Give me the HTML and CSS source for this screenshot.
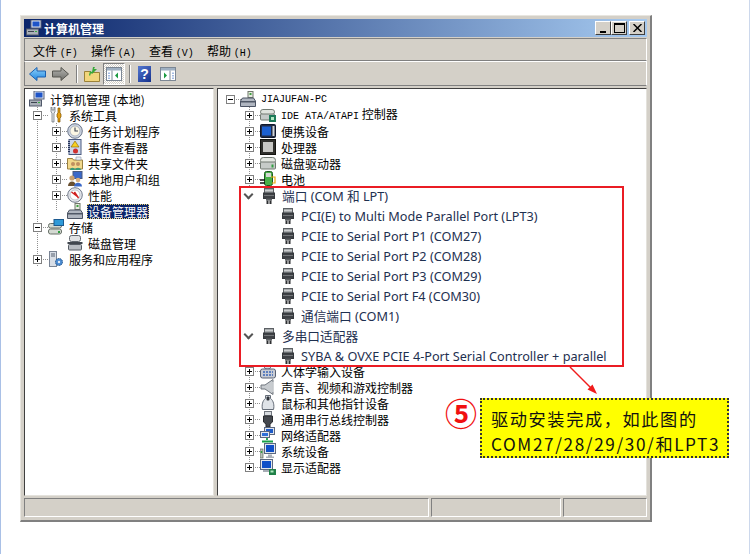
FILE: index.html
```html
<!DOCTYPE html>
<html lang="zh-CN">
<head>
  <meta charset="UTF-8" />
  <title>计算机管理</title>
  <link rel="stylesheet" href="styles.css">
</head>
<body>
<svg class="defs" width="0" height="0">
  <defs>
    <symbol id="i-computer" viewBox="0 0 16 16">
      <rect x="5" y="0" width="10" height="8" fill="#dfe6f0" stroke="#56607a"/><rect x="6.500" y="1.500" width="7" height="5" fill="#1f55c8"/>
      <rect x="0.500" y="9" width="12" height="6" fill="#aab0b8" stroke="#50586a"/><rect x="2" y="11" width="6" height="1" fill="#3c4450"/><rect x="9" y="11" width="2" height="1" fill="#35b040"/>
    </symbol>
    <symbol id="i-tools" viewBox="0 0 16 16">
      <path d="M3 0v5l1 1v9h2V6l1-1V0L6 0v3H4V0z" fill="#e6e8ea" stroke="#606870" stroke-width=".7"/>
      <path d="M10 1h2v5l1 1v3l-1 1v4h-2v-4l-1-1V7l1-1z" fill="#e8a010" stroke="#7a5200" stroke-width=".7"/>
    </symbol>
    <symbol id="i-clock" viewBox="0 0 16 16">
      <circle cx="8" cy="8" r="7.300" fill="#cfd6e2" stroke="#6a7488"/><circle cx="8" cy="8" r="5" fill="#fbf6e4" stroke="#8a94a8" stroke-width=".6"/><path d="M8 4.500V8h3" fill="none" stroke="#3a4252" stroke-width="1.100"/>
    </symbol>
    <symbol id="i-event" viewBox="0 0 16 16">
      <rect x="2" y="0.500" width="12" height="15" fill="#cdd8ea" stroke="#4a5a80"/><path d="M8 2l4 6H4z" fill="#f8d020" stroke="#806000" stroke-width=".6"/><circle cx="8.500" cy="12" r="2.500" fill="#d03030"/><path d="M2 2v12" stroke="#26345c" stroke-width="2" stroke-dasharray="1 1"/>
    </symbol>
    <symbol id="i-share" viewBox="0 0 16 16">
      <path d="M0.500 3.500h5l1 1.500h9v9h-15z" fill="#f2d98c" stroke="#9a8040"/><path d="M9 2h5v3H9z" fill="#e8eef4" stroke="#8a96a8" stroke-width=".6"/><circle cx="6" cy="9" r="2" fill="#c09060"/><circle cx="11" cy="9" r="2" fill="#c09060"/><path d="M3 15c0-3 5-3 5 0zM8 15c0-3 6-3 6 0z" fill="#3a9a78"/>
    </symbol>
    <symbol id="i-users" viewBox="0 0 16 16">
      <rect x="6" y="0.500" width="9" height="7" fill="#3a68c8" stroke="#4a5a80"/><circle cx="5" cy="7" r="2.600" fill="#c8a070"/><path d="M1 15c0-6 8-6 8 0z" fill="#6a5030"/><circle cx="11" cy="9" r="2.300" fill="#d8b080"/><path d="M7 15.500c0-5 8-5 8 0z" fill="#3a68c8"/>
    </symbol>
    <symbol id="i-perf" viewBox="0 0 16 16">
      <circle cx="8" cy="8" r="7.300" fill="#e8eaee" stroke="#707888"/><circle cx="8" cy="8" r="5" fill="#fff" stroke="#9aa2b0" stroke-width=".6"/><path d="M4.500 5l4 3-1-3 4 6" fill="none" stroke="#d02020" stroke-width="1.400"/>
    </symbol>
    <symbol id="i-devmgr" viewBox="0 0 16 16">
      <rect x="8" y="0.500" width="5" height="6" fill="#e6eae0" stroke="#70786a"/><rect x="9.500" y="2" width="2" height="2" fill="#40a040"/>
      <path d="M0.500 10l2-3h11l2 3v5.500H.5z" fill="#b0b6c0" stroke="#4c5464"/><rect x="1" y="10" width="14" height="1.500" fill="#505866"/>
    </symbol>
    <symbol id="i-storage" viewBox="0 0 16 16">
      <rect x="0.500" y="4.500" width="13" height="4.500" rx="2" fill="#d4dad2" stroke="#687068"/><rect x="0.500" y="10" width="13" height="5" rx="2" fill="#d4dad2" stroke="#687068"/><rect x="10" y="12" width="2" height="2" fill="#30a040"/><rect x="6" y="0.500" width="9.500" height="6" fill="#2f9ad8" stroke="#1c5a90"/>
    </symbol>
    <symbol id="i-disk" viewBox="0 0 16 16">
      <rect x="2.500" y="0.500" width="11" height="6" rx="2" fill="#e0e2e4" stroke="#60666e"/><rect x="0.500" y="7" width="15" height="2" fill="#40464e"/><rect x="1.500" y="9.500" width="13" height="5.500" rx="1" fill="#b8bcc2" stroke="#565c64"/>
    </symbol>
    <symbol id="i-services" viewBox="0 0 16 16">
      <rect x="1.500" y="0.500" width="7" height="15" fill="#d8dee6" stroke="#7a8494"/><path d="M3 3h4M3 5h4" stroke="#566070"/><circle cx="11" cy="11" r="3.500" fill="#4a8ad0" stroke="#2a5a90" stroke-dasharray="1.500 .6"/><circle cx="11" cy="11" r="1.200" fill="#e4eef8"/>
    </symbol>
    <symbol id="i-ide" viewBox="0 0 16 16">
      <rect x="0.500" y="2.500" width="14" height="5" rx="2.400" fill="#dfe3de" stroke="#737b73"/><rect x="0.500" y="7" width="14" height="6" rx="1" fill="#c4c9c8" stroke="#737b73"/><rect x="9" y="8" width="7" height="7" fill="#1c7a58"/><rect x="11" y="10" width="3" height="3" fill="#b0e8c0"/>
    </symbol>
    <symbol id="i-portable" viewBox="0 0 16 16">
      <rect x="0.500" y="1.500" width="15" height="13" rx="1" fill="#222c44" stroke="#10182c"/><rect x="2" y="3.500" width="9" height="9" fill="#1c60d0"/><rect x="12.500" y="3" width="2" height="10" fill="#d0d4d8"/>
    </symbol>
    <symbol id="i-cpu" viewBox="0 0 16 16">
      <rect x="0.500" y="0.500" width="15" height="15" fill="#30302c" stroke="#14140f"/><rect x="3" y="3" width="10" height="10" fill="#c8c8c4"/>
    </symbol>
    <symbol id="i-drive" viewBox="0 0 16 16">
      <rect x="0.500" y="2.500" width="15" height="6" rx="2.800" fill="#e4e8e2" stroke="#707870"/><rect x="0.500" y="7" width="15" height="7" rx="1" fill="#c6cbc8" stroke="#707870"/><rect x="11.500" y="9.500" width="2" height="3" fill="#30a040"/>
    </symbol>
    <symbol id="i-battery" viewBox="0 0 16 16">
      <rect x="4.500" y="0.500" width="8" height="14" rx="2" fill="#48b048" stroke="#1c5a20"/><rect x="6" y="2" width="5" height="4" fill="#d4d8d4"/><path d="M0 9h5M0 12h5" stroke="#101010" stroke-width="1.400"/><path d="M11 6l4 0v6h-3" fill="none" stroke="#e8a810" stroke-width="1.200"/>
    </symbol>
    <symbol id="i-port" viewBox="0 0 12 16">
      <rect x="1.500" y="0.500" width="9" height="5" fill="#a4a8aa" stroke="#5c6064"/>
      <path d="M2.500 2.500h7" stroke="#f4f4f4" stroke-dasharray="1 1"/>
      <rect x="0.500" y="5" width="11" height="5.500" fill="#3e4145" stroke="#35383c"/>
      <rect x="1" y="7" width="10" height="1" fill="#74777a"/>
      <rect x="3" y="10.500" width="6" height="2" fill="#5c5f62"/>
      <path d="M3.500 12.500h2V16h-2zM6.500 12.500h2V16h-2z" fill="#2e3033"/>
    </symbol>
    <symbol id="i-hid" viewBox="0 0 16 16">
      <rect x="4" y="0" width="7" height="6" rx="3" fill="#d8dce2" stroke="#70788a"/><rect x="0.500" y="6" width="15" height="9" rx="2" fill="#c8ccd4" stroke="#5a6274"/><path d="M3 9h10M3 12h10" stroke="#3a66b8" stroke-width="1.400" stroke-dasharray="2 1"/>
    </symbol>
    <symbol id="i-sound" viewBox="0 0 16 16">
      <path d="M1 6h4L13 0.500v15L5 10H1z" fill="#c8ccd0" stroke="#70767e"/><path d="M13 3v10" stroke="#eef0f2"/>
    </symbol>
    <symbol id="i-mouse" viewBox="0 0 16 16">
      <path d="M5.500 0.500h5v3c3 2 4 7 3 11h-11c-1-4 0-9 3-11z" fill="#dfe3e8" stroke="#646c78"/><rect x="6.500" y="1.500" width="3" height="4" rx="1" fill="#30343c"/>
    </symbol>
    <symbol id="i-usb" viewBox="0 0 16 16">
      <rect x="4.500" y="0.500" width="7" height="4" fill="#d8dce0" stroke="#70767e"/><path d="M3.500 5h9v6l-2.500 2v3H6v-3L3.500 11z" fill="#44484e" stroke="#2a2c30"/>
    </symbol>
    <symbol id="i-network" viewBox="0 0 16 16">
      <rect x="4.500" y="0.500" width="10" height="7" fill="#dfe4ec" stroke="#5c6880"/><rect x="6" y="2" width="7" height="4" fill="#1c5ac8"/><rect x="0.500" y="4.500" width="9" height="6" fill="#e4e8f0" stroke="#5c6880"/><rect x="2" y="6" width="6" height="3" fill="#2f70d8"/><path d="M7 11v2M2 14.500h11" stroke="#18a048" stroke-width="1.800"/>
    </symbol>
    <symbol id="i-system" viewBox="0 0 16 16">
      <rect x="0" y="6" width="3" height="9" fill="#b8c0b8" stroke="#60685c" stroke-width=".7"/><rect x="0.800" y="8" width="1.400" height="2" fill="#30a040"/><rect x="4.500" y="0.500" width="11" height="10" fill="#e2e6ec" stroke="#5c6880"/><rect x="6" y="2" width="8" height="7" fill="#1050c8"/><path d="M8 11.500h4v2h2v1.500H6v-1.500h2z" fill="#a8aeb6"/>
    </symbol>
    <symbol id="i-display" viewBox="0 0 16 16">
      <rect x="0.500" y="0.500" width="12" height="10" fill="#e2e6ec" stroke="#5c6880"/><rect x="2" y="2" width="9" height="7" fill="#1050c8"/><rect x="3" y="11" width="7" height="2" fill="#a8aeb6"/><rect x="9" y="10" width="7" height="6" fill="#208048"/><rect x="10.500" y="11.500" width="3" height="2" fill="#b0e8c0"/>
    </symbol>
    <linearGradient id="g-back" x1="0" y1="0" x2="0" y2="1"><stop offset="0" stop-color="#8fd2fa"/><stop offset="1" stop-color="#1f86e0"/></linearGradient>
    <linearGradient id="g-forward" x1="0" y1="0" x2="0" y2="1"><stop offset="0" stop-color="#b4b4b0"/><stop offset="1" stop-color="#6e6e6a"/></linearGradient>
  </defs>
</svg>

<div class="window">
  <div class="titlebar">
    <svg class="ti"><use href="#i-computer"/></svg>
    <span class="title-text">计算机管理</span>
    <div class="winbtns">
      <button class="winbtn"><span class="min-mark"></span></button>
      <button class="winbtn"><span class="max-mark"></span></button>
      <button class="winbtn gap-left"><svg width="9" height="8" viewBox="0 0 9 8"><path d="M0.500 0l8 8M8.500 0l-8 8" stroke="#000" stroke-width="1.500"/></svg></button>
    </div>
  </div>

  <div class="menubar">
    <span class="menu-item">文件 <span class="acc">(F)</span></span>
    <span class="menu-item">操作 <span class="acc">(A)</span></span>
    <span class="menu-item">查看 <span class="acc">(V)</span></span>
    <span class="menu-item">帮助 <span class="acc">(H)</span></span>
  </div>

  <div class="toolbar">
    <svg class="tool" width="17" height="16" viewBox="0 0 17 16"><path d="M0.500 8L8 1.500v3.500h8.500v6H8v3.500z" fill="url(#g-back)" stroke="#1c60b0"/></svg>
    <svg class="tool" width="17" height="16" viewBox="0 0 17 16"><path d="M16.500 8L9 1.500v3.500H.5v6H9v3.500z" fill="url(#g-forward)" stroke="#55554f"/></svg>
    <span class="sep"></span>
    <svg class="tool tool-up" width="16" height="16" viewBox="0 0 16 16"><path d="M0.500 5.500h6l1 1h8v9h-15z" fill="#f2d67c" stroke="#9c8238"/><path d="M5 9l1-4 2 1 1-5h2l-1 2 3 0-5 5-1-1-1 3z" fill="#38a838"/></svg>
    <span class="tool-active"><svg width="16" height="14" viewBox="0 0 16 14"><rect x="0.500" y="0.500" width="15" height="13" fill="#fff" stroke="#7c8794"/><rect x="1" y="1" width="14" height="2.500" fill="#9fb0c2"/><path d="M6 3.500v10" stroke="#7c8794"/><path d="M3 5.500v7" stroke="#4a78c8" stroke-dasharray="1.500 1"/><path d="M12 5.500v6l-3-3z" fill="#1c9a40"/></svg></span>
    <span class="sep sep-b"></span>
    <span class="help-icon">?</span>
    <svg class="tool" width="16" height="14" viewBox="0 0 16 14"><rect x="0.500" y="0.500" width="15" height="13" fill="#fff" stroke="#7c8794"/><rect x="1" y="1" width="14" height="2.500" fill="#9fb0c2"/><path d="M10 3.500v10" stroke="#7c8794"/><path d="M13 5.500v7" stroke="#4a78c8" stroke-dasharray="1.500 1"/><path d="M4 5.500v6l3-3z" fill="#1c9a40"/></svg>
  </div>

  <div class="panes">
    <div class="pane left-pane">
      <div class="row"><svg class="ic"><use href="#i-computer"/></svg><span class="lb">计算机管理 (本地)</span></div>
      <div class="branch">
        <div class="row lv1"><i class="exp minus"></i><svg class="ic"><use href="#i-tools"/></svg><span class="lb">系统工具</span></div>
        <div class="branch sub">
          <div class="row lv2"><i class="exp plus"></i><svg class="ic"><use href="#i-clock"/></svg><span class="lb">任务计划程序</span></div>
          <div class="row lv2"><i class="exp plus"></i><svg class="ic"><use href="#i-event"/></svg><span class="lb">事件查看器</span></div>
          <div class="row lv2"><i class="exp plus"></i><svg class="ic"><use href="#i-share"/></svg><span class="lb">共享文件夹</span></div>
          <div class="row lv2"><i class="exp plus"></i><svg class="ic"><use href="#i-users"/></svg><span class="lb">本地用户和组</span></div>
          <div class="row lv2"><i class="exp plus"></i><svg class="ic"><use href="#i-perf"/></svg><span class="lb">性能</span></div>
          <div class="row lv2"><i class="exp none"></i><svg class="ic"><use href="#i-devmgr"/></svg><span class="lb selected">设备管理器</span></div>
        </div>
        <div class="row lv1"><i class="exp minus"></i><svg class="ic"><use href="#i-storage"/></svg><span class="lb">存储</span></div>
        <div class="row lv2"><i class="exp none"></i><svg class="ic"><use href="#i-disk"/></svg><span class="lb">磁盘管理</span></div>
        <div class="row lv1"><i class="exp plus"></i><svg class="ic"><use href="#i-services"/></svg><span class="lb">服务和应用程序</span></div>
      </div>
    </div>

    <div class="splitter"></div>

    <div class="pane right-pane">
      <div class="row rroot"><i class="exp minus"></i><svg class="ic"><use href="#i-devmgr"/></svg><span class="lb latin-mono">JIAJUFAN-PC</span></div>
      <div class="branch rbranch">
        <div class="row rlv1"><i class="exp plus"></i><svg class="ic"><use href="#i-ide"/></svg><span class="lb"><span class="latin-mono">IDE ATA/ATAPI</span> 控制器</span></div>
        <div class="row rlv1"><i class="exp plus"></i><svg class="ic"><use href="#i-portable"/></svg><span class="lb">便携设备</span></div>
        <div class="row rlv1"><i class="exp plus"></i><svg class="ic"><use href="#i-cpu"/></svg><span class="lb">处理器</span></div>
        <div class="row rlv1"><i class="exp plus"></i><svg class="ic"><use href="#i-drive"/></svg><span class="lb">磁盘驱动器</span></div>
        <div class="row rlv1"><i class="exp plus"></i><svg class="ic"><use href="#i-battery"/></svg><span class="lb">电池</span></div>

        <div class="highlight">
          <div class="hrow cat"><span class="chev"></span><svg class="pi"><use href="#i-port"/></svg><span class="hl">端口 (COM 和 LPT)</span></div>
          <div class="hrow dev"><svg class="pi"><use href="#i-port"/></svg><span class="hl">PCI(E) to Multi Mode Parallel Port (LPT3)</span></div>
          <div class="hrow dev"><svg class="pi"><use href="#i-port"/></svg><span class="hl">PCIE to Serial Port P1 (COM27)</span></div>
          <div class="hrow dev"><svg class="pi"><use href="#i-port"/></svg><span class="hl">PCIE to Serial Port P2 (COM28)</span></div>
          <div class="hrow dev"><svg class="pi"><use href="#i-port"/></svg><span class="hl">PCIE to Serial Port P3 (COM29)</span></div>
          <div class="hrow dev"><svg class="pi"><use href="#i-port"/></svg><span class="hl">PCIE to Serial Port F4 (COM30)</span></div>
          <div class="hrow dev"><svg class="pi"><use href="#i-port"/></svg><span class="hl">通信端口 (COM1)</span></div>
          <div class="hrow cat"><span class="chev"></span><svg class="pi"><use href="#i-port"/></svg><span class="hl">多串口适配器</span></div>
          <div class="hrow dev"><svg class="pi"><use href="#i-port"/></svg><span class="hl">SYBA &amp; OVXE PCIE 4-Port Serial Controller + parallel</span></div>
        </div>

        <div class="row rlv1"><i class="exp plus"></i><svg class="ic"><use href="#i-hid"/></svg><span class="lb">人体学输入设备</span></div>
        <div class="row rlv1"><i class="exp plus"></i><svg class="ic"><use href="#i-sound"/></svg><span class="lb">声音、视频和游戏控制器</span></div>
        <div class="row rlv1"><i class="exp plus"></i><svg class="ic"><use href="#i-mouse"/></svg><span class="lb">鼠标和其他指针设备</span></div>
        <div class="row rlv1"><i class="exp plus"></i><svg class="ic"><use href="#i-usb"/></svg><span class="lb">通用串行总线控制器</span></div>
        <div class="row rlv1"><i class="exp plus"></i><svg class="ic"><use href="#i-network"/></svg><span class="lb">网络适配器</span></div>
        <div class="row rlv1"><i class="exp plus"></i><svg class="ic"><use href="#i-system"/></svg><span class="lb">系统设备</span></div>
        <div class="row rlv1"><i class="exp plus"></i><svg class="ic"><use href="#i-display"/></svg><span class="lb">显示适配器</span></div>
      </div>
    </div>
  </div>

  <div class="statusbar">
    <div class="cell grow"></div>
    <div class="cell mid"></div>
    <div class="cell end"></div>
  </div>
</div>

<!-- annotation on top of the screenshot -->
<svg class="arrow" width="40" height="40" viewBox="0 0 40 40"><path d="M1 1L26 26" stroke="#f01c1c" stroke-width="1.500"/><path d="M28 28L18.500 23.500L23.500 18.500z" fill="#f01c1c"/></svg>
<span class="step-no">⑤</span>
<div class="callout">
  <div>驱动安装完成，如此图的</div>
  <div>COM27/28/29/30/和LPT3</div>
</div>
</body>
</html>
```

FILE: styles.css
```css
html, body {
  margin: 0;
  padding: 0;
}
body {
  width: 750px;
  height: 554px;
  box-sizing: border-box;
  position: relative;
  overflow: hidden;
  background-color: #fff;
  border-left: 1px solid #a9c0e6;
  border-right: 1px solid #ccd8ec;
  font-family: "Noto Sans CJK SC", "Liberation Sans", sans-serif;
  font-size: 12px;
  color: #000;
}
.defs {
  position: absolute;
}

/* window frame */
.window {
  width: 632px;
  height: 507px;
  margin: 15px 0 0 19px;
  box-sizing: border-box;
  padding: 3px;
  display: flex;
  flex-direction: column;
  background-color: #d4d0c8;
  border-top: 1px solid #e8e6e0;
  border-left: 1px solid #e8e6e0;
  border-right: 2px solid #808080;
  border-bottom: 2px solid #808080;
}
.titlebar {
  height: 18px;
  flex: none;
  display: flex;
  align-items: center;
  padding-left: 2px;
  background: linear-gradient(to right, #0a246a, #a6caf0);
}
.ti {
  width: 16px;
  height: 16px;
  margin-right: 2px;
}
.title-text {
  color: #fff;
  font-weight: bold;
  font-size: 12px;
}
.winbtns {
  margin-left: auto;
  margin-right: 2px;
  display: flex;
}
.winbtn {
  width: 16px;
  height: 14px;
  padding: 0;
  display: flex;
  align-items: center;
  justify-content: center;
  background-color: #d4d0c8;
  border: 1px solid;
  border-color: #fff #404040 #404040 #fff;
}
.gap-left {
  margin-left: 2px;
}
.min-mark {
  width: 6px;
  height: 2px;
  margin-top: 7px;
  background-color: #000;
}
.max-mark {
  width: 9px;
  height: 7px;
  border: 1px solid #000;
  border-top-width: 2px;
}

.menubar {
  height: 23px;
  flex: none;
  margin-top: 1px;
  display: flex;
  align-items: center;
  gap: 16px;
  padding-left: 8px;
  box-sizing: border-box;
  border: 1px solid;
  border-color: #808080 #fff #808080 #808080;
}
.menu-item {
  width: 42px;
  white-space: nowrap;
  padding-top: 1px;
}
.acc {
  font-family: "Liberation Mono", monospace;
  font-size: 10px;
}
.toolbar {
  height: 25px;
  flex: none;
  display: flex;
  align-items: center;
  padding-left: 4px;
  box-sizing: border-box;
  border: 1px solid;
  border-color: #fff #fff #808080 #808080;
}
.tool {
  flex: none;
  margin-right: 6px;
}
.tool-up {
  margin-right: 3px;
}
.sep {
  width: 1px;
  height: 18px;
  margin: 0 6px 0 1px;
  background-color: #808080;
  border-right: 1px solid #fff;
}
.sep-b {
  margin: 0 7px 0 4px;
}
.tool-active {
  width: 22px;
  height: 22px;
  display: flex;
  align-items: center;
  justify-content: center;
  box-sizing: border-box;
  background: repeating-conic-gradient(#fff 0 25%, #d4d0c8 0 50%) 0 0 / 2px 2px;
  border: 1px solid;
  border-color: #808080 #fff #fff #808080;
}
.help-icon {
  width: 13px;
  height: 16px;
  margin-right: 9px;
  text-align: center;
  line-height: 16px;
  font-family: "Liberation Sans", sans-serif;
  font-weight: bold;
  font-size: 14px;
  color: #fff;
  background: linear-gradient(135deg, #5578d0, #14308c);
}

/* panes */
.panes {
  flex: 1;
  display: flex;
  margin-top: 2px;
  min-height: 0;
}
.pane {
  box-sizing: border-box;
  background-color: #fff;
  border: 1px solid;
  border-color: #404040 #e4e2dc #e4e2dc #404040;
  padding-top: 2px;
}
.left-pane {
  width: 190px;
  flex: none;
}
.right-pane {
  flex: 1;
}
.splitter {
  width: 3px;
  flex: none;
}

.row {
  height: 16px;
  display: flex;
  align-items: center;
  white-space: nowrap;
}
.left-pane > .row {
  padding-left: 4px;
}
.ic {
  width: 16px;
  height: 16px;
  flex: none;
  margin-right: 5px;
}
.lb {
  line-height: 15px;
}
.selected {
  padding: 0 1px;
  margin-left: -1px;
  color: #fff;
  background-color: #0a246a;
  outline: 1px dotted #e8d070;
  outline-offset: -1px;
}
.latin-mono {
  font-family: "Liberation Mono", "Noto Sans CJK SC", monospace;
  font-size: 10px;
}
.exp {
  width: 9px;
  height: 9px;
  flex: none;
  position: relative;
  box-sizing: border-box;
  margin-right: 6px;
  background-color: #fff;
  border: 1px solid #808080;
  box-shadow: 6px 0 0 -4px #909090, 8px 0 0 -4px #909090, 10px 0 0 -4px #909090;
}
.exp.none {
  visibility: hidden;
}
.exp::before {
  content: "";
  position: absolute;
  left: 1px;
  top: 3px;
  width: 5px;
  height: 1px;
  background-color: #000;
}
.exp.plus::after {
  content: "";
  position: absolute;
  left: 3px;
  top: 1px;
  width: 1px;
  height: 5px;
  background-color: #000;
}
/* dotted tree guide */
.branch {
  background: repeating-linear-gradient(#909090 0 1px, transparent 1px 2px) no-repeat 12px 0 / 1px 100%;
}
.branch.sub {
  background-position: 31px 0;
  background-size: 1px 88px;
}
.lv1 {
  padding-left: 8px;
}
.lv2 {
  padding-left: 27px;
}

.rroot {
  padding-left: 8px;
}
.rroot .exp {
  margin-right: 5px;
}
.rbranch {
  background-position: 31px 0;
  background-size: 1px 360px;
}
.rlv1 {
  padding-left: 27px;
}

/* red box around the new ports */
.highlight {
  position: relative;
  z-index: 1;
  height: 181px;
  box-sizing: border-box;
  margin: -1px 22px -4px 21px;
  background-color: #fff;
  border: 2px solid #ea1c24;
}
.hrow {
  height: 20px;
  box-sizing: border-box;
  display: flex;
  align-items: center;
  white-space: nowrap;
  font-family: "Noto Sans", "Noto Sans CJK SC", sans-serif;
  font-size: 12.700px;
  color: #1e3050;
}
.hrow:first-child {
  height: 18px;
  padding-bottom: 2px;
}
.hl {
  line-height: 14px;
}
.cat {
  padding-left: 4px;
}
.dev {
  padding-left: 41px;
}
.chev {
  width: 7px;
  height: 7px;
  margin: -4px 8px 0 0;
  transform: rotate(45deg);
  border-right: 2px solid #555;
  border-bottom: 2px solid #555;
  box-sizing: border-box;
}
.pi {
  width: 12px;
  height: 16px;
  flex: none;
  margin-right: 7px;
}
.cat .pi {
  margin-left: 3px;
}

.statusbar {
  height: 19px;
  flex: none;
  margin-top: 2px;
  display: flex;
  gap: 2px;
}
.cell {
  box-sizing: border-box;
  border: 1px solid;
  border-color: #808080 #fff #fff #808080;
}
.grow {
  flex: 1;
}
.mid {
  width: 130px;
}
.end {
  width: 84px;
}

/* annotation */
.arrow {
  position: absolute;
  left: 568px;
  top: 366px;
}
.step-no {
  position: absolute;
  left: 444px;
  top: 390px;
  font-size: 32px;
  line-height: 44px;
  font-weight: bold;
  color: #f01010;
}
.callout {
  position: absolute;
  left: 479px;
  top: 398px;
  width: 249px;
  height: 60px;
  box-sizing: border-box;
  padding: 6px 0 0 9px;
  background-color: #ff0;
  border: 2px dotted #333;
  font-size: 17.200px;
  line-height: 25px;
  letter-spacing: 1.600px;
  white-space: nowrap;
  color: #111;
}
```
